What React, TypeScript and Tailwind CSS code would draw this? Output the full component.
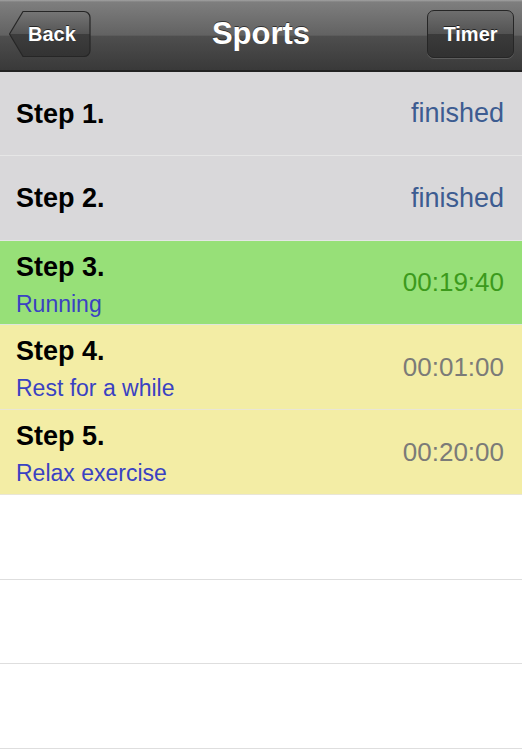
import React from 'react'

type Step = {
  title: string
  note?: string
  status: string
  kind: 'done' | 'active' | 'todo'
  h: string
}

const STEPS: Step[] = [
  { title: 'Step 1.', status: 'finished', kind: 'done', h: 'h-[84px]' },
  { title: 'Step 2.', status: 'finished', kind: 'done', h: 'h-[85px]' },
  { title: 'Step 3.', note: 'Running', status: '00:19:40', kind: 'active', h: 'h-[84px]' },
  { title: 'Step 4.', note: 'Rest for a while', status: '00:01:00', kind: 'todo', h: 'h-[85px]' },
  { title: 'Step 5.', note: 'Relax exercise', status: '00:20:00', kind: 'todo', h: 'h-[85px]' },
]

const EMPTY_ROWS = ['h-[85px]', 'h-[84px]', 'h-[85px]']

function BackButton() {
  return (
    <button className="relative w-[83px] h-[48px] flex items-center pl-[20px] text-white font-bold text-[20px] [text-shadow:0_-1px_0_rgba(0,0,0,0.6)]">
      <svg className="absolute inset-0" width="83" height="48" viewBox="0 0 83 48">
        <defs>
          <linearGradient id="backFill" x1="0" y1="0" x2="0" y2="1">
            <stop offset="0" stopColor="#767676" />
            <stop offset="0.5" stopColor="#545454" />
            <stop offset="0.5" stopColor="#3d3d3d" />
            <stop offset="1" stopColor="#333333" />
          </linearGradient>
        </defs>
        <path
          d="M15 1.5 H76 a6 6 0 0 1 6 6 V40.5 a6 6 0 0 1 -6 6 H15 L1.5 24 Z"
          fill="url(#backFill)"
          stroke="#262626"
          strokeWidth="1.2"
          strokeLinejoin="round"
        />
      </svg>
      <span className="relative">Back</span>
    </button>
  )
}

function TimerButton() {
  return (
    <button className="w-[87px] h-[48px] rounded-[7px] border border-[#262626] bg-[linear-gradient(to_bottom,#6e6e6e_0%,#525252_50%,#3b3b3b_50%,#313131_100%)] shadow-[0_1px_0_rgba(255,255,255,0.15)] text-white font-bold text-[20px] [text-shadow:0_-1px_0_rgba(0,0,0,0.6)]">
      Timer
    </button>
  )
}

function StepRow({ step }: { step: Step }) {
  const bg =
    step.kind === 'done'
      ? 'bg-[#d9d8da] border-[#e6e6e6]'
      : step.kind === 'active'
      ? 'bg-[#97e078] border-[#dfe6dc]'
      : 'bg-[#f3eda5] border-[#e9e6d6]'
  const statusColor =
    step.kind === 'done'
      ? 'text-[#3d5c91] text-[27px]'
      : step.kind === 'active'
      ? 'text-[#3c9a1c] text-[26px]'
      : 'text-[#7b7b78] text-[26px]'

  return (
    <div className={[step.h, bg, 'flex items-center justify-between pl-[16px] pr-[18px] border-b'].join(' ')}>
      {step.note ? (
        <div className="flex flex-col self-start pt-[11px]">
          <span className="text-[27px] leading-[30px] font-bold text-black">{step.title}</span>
          <span className="text-[23px] leading-[26px] mt-[9px] text-[#3a42c2]">{step.note}</span>
        </div>
      ) : (
        <span className="text-[27px] leading-[30px] font-bold text-black">{step.title}</span>
      )}
      <span className={statusColor}>{step.status}</span>
    </div>
  )
}

export default function App() {
  return (
    <div className="w-[522px] h-[750px] overflow-hidden bg-white font-['Liberation_Sans',Arial,sans-serif]">
      {/* Nav bar */}
      <div className="h-[72px] flex items-center px-[8px] pb-[2px] border-b-2 border-[#222222] bg-[linear-gradient(to_bottom,#a2a2a2_0%,#7e7e7e_3%,#626262_50%,#4e4e4e_52%,#393939_100%)]">
        <div className="flex-1 flex justify-start">
          <BackButton />
        </div>
        <h1 className="text-white font-bold text-[31px] [text-shadow:0_-1px_0_rgba(0,0,0,0.55)]">Sports</h1>
        <div className="flex-1 flex justify-end">
          <TimerButton />
        </div>
      </div>

      {/* Steps */}
      {STEPS.map(step => (
        <StepRow key={step.title} step={step} />
      ))}

      {/* Empty table rows */}
      {EMPTY_ROWS.map((h, i) => (
        <div key={i} className={[h, 'border-b border-[#dedede]'].join(' ')} />
      ))}
    </div>
  )
}
